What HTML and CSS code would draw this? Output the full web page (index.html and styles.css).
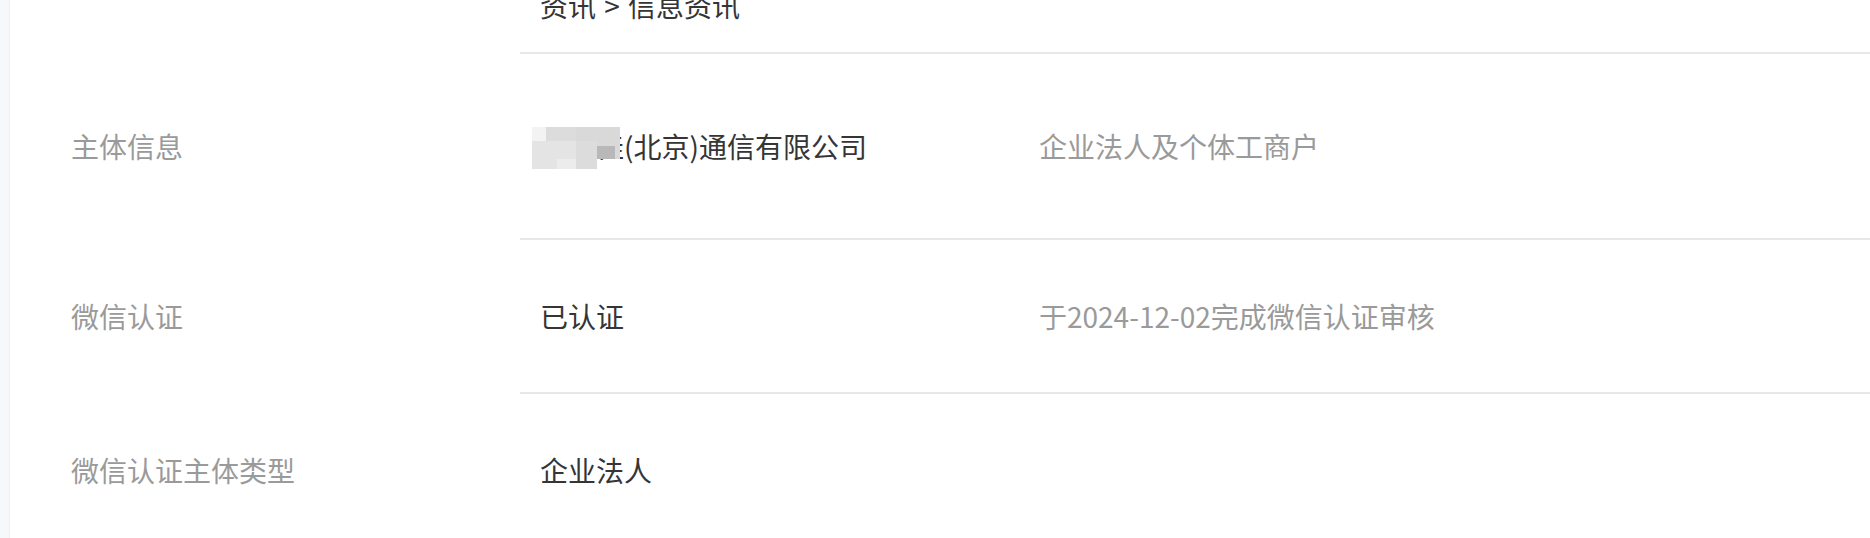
FILE: index.html
```html
<!DOCTYPE html>
<html lang="zh-CN">
<head>
<meta charset="utf-8">
<title>账号详情</title>
<link rel="stylesheet" href="styles.css">
</head>
<body>
<div class="page">
  <aside class="rail"></aside>
  <main class="info">
    <div class="row row-top">
      <div class="label"></div>
      <div class="cells">
        <div class="value">资讯 <span class="sep">&gt;</span> 信息资讯</div>
        <div class="desc"></div>
      </div>
    </div>
    <div class="row row-tall">
      <div class="label">主体信息</div>
      <div class="cells">
        <div class="value"><span class="masked">某某佳<span class="mosaic"><i class="m1"></i><i class="m2"></i><i class="m3"></i><i class="m4"></i><i class="m5"></i><i class="m6"></i><i class="m7"></i><i class="m8"></i><i class="m9"></i><i class="m10"></i></span></span>(北京)通信有限公司</div>
        <div class="desc">企业法人及个体工商户</div>
      </div>
    </div>
    <div class="row">
      <div class="label">微信认证</div>
      <div class="cells">
        <div class="value">已认证</div>
        <div class="desc">于2024-12-02完成微信认证审核</div>
      </div>
    </div>
    <div class="row row-last">
      <div class="label">微信认证主体类型</div>
      <div class="cells">
        <div class="value">企业法人</div>
        <div class="desc"></div>
      </div>
    </div>
  </main>
</div>
</body>
</html>
```

FILE: styles.css
```css
html, body {
  margin: 0;
  padding: 0;
  background: #ffffff;
  overflow: hidden;
}

body {
  font-family: "Noto Sans CJK SC", "Noto Sans", sans-serif;
  font-size: 28px;
  line-height: 40px;
  color: #353535;
}

.page {
  display: flex;
  height: 538px;
  overflow: hidden;
}

.rail {
  width: 10px;
  flex: none;
  background: #f7f8fa;
  box-shadow: inset -1px 0 0 #f0f1f4;
}

.info {
  flex: 1;
  display: flex;
  flex-direction: column;
}

.row {
  display: grid;
  grid-template-columns: 510px 1fr;
}

.label {
  padding: 56px 0 56px 61px;
  color: #9a9a9a;
}

.cells {
  display: grid;
  grid-template-columns: 519px 1fr;
  border-bottom: 2px solid #e7e7eb;
  padding: 56px 0;
}

.row-top {
  margin-top: -15px;
}

.row-top .label,
.row-top .cells {
  padding-top: 0;
  padding-bottom: 27px;
}

.row-tall .label,
.row-tall .cells {
  padding-top: 72px;
  padding-bottom: 72px;
}

.row-last .cells {
  border-bottom: none;
}

.value {
  padding-left: 20px;
  white-space: nowrap;
}

.sep {
  padding: 0 2px;
}

.desc {
  color: #9a9a9a;
  white-space: nowrap;
}

.masked {
  position: relative;
}

.mosaic {
  position: absolute;
  left: -8px;
  top: 1px;
  width: 88px;
  height: 42px;
  display: grid;
  grid-template-columns: 14px 11px 19px 21px 18px 5px;
  grid-template-rows: 14px 5px 13px 10px;
}

.mosaic i {
  display: block;
}

.m1 { grid-column: 1; grid-row: 1; background: #f3f3f3; }
.m2 { grid-column: 2 / 4; grid-row: 1; background: #dcdcdc; }
.m3 { grid-column: 4 / 7; grid-row: 1; background: #d9d9d9; }
.m4 { grid-column: 1 / 3; grid-row: 2 / 5; background: #e4e4e4; }
.m5 { grid-column: 3; grid-row: 2 / 4; background: #e4e4e4; }
.m6 { grid-column: 3; grid-row: 4; background: #ececec; }
.m7 { grid-column: 4; grid-row: 2 / 5; background: #dcdcdc; }
.m8 { grid-column: 5 / 7; grid-row: 2; background: #d9d9d9; }
.m9 { grid-column: 5; grid-row: 3; background: #b8b8b8; }
.m10 { grid-column: 6; grid-row: 3; background: #d9d9d9; }
```
